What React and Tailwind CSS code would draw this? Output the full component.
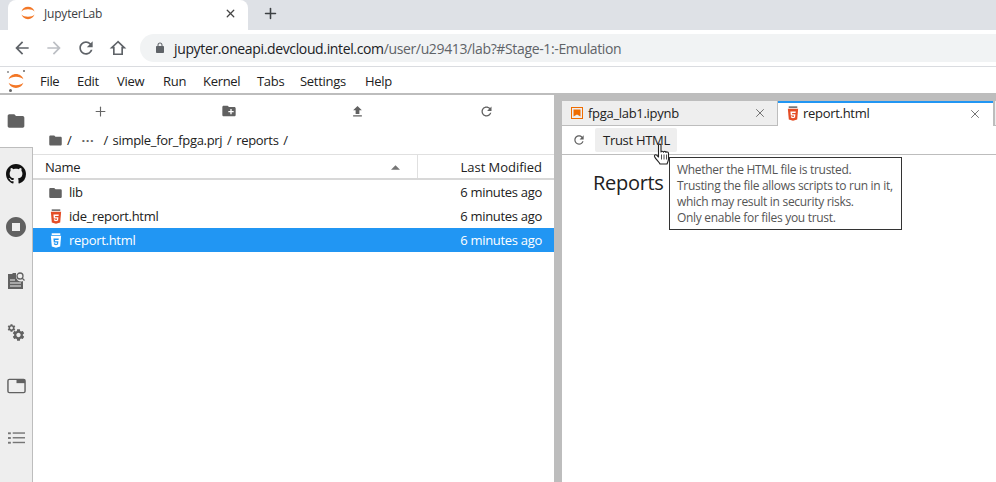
import React from 'react';
import { X, Plus } from 'lucide-react';

const FONT = "font-['Open_Sans','Noto_Sans',sans-serif]";

const Mat = ({ d, className = '', fill = '#616161' }) => (
    <svg viewBox="0 0 24 24" className={className} fill={fill}><path d={d} /></svg>
);

const FOLDER = 'M10 4H4c-1.1 0-2 .9-2 2v12c0 1.1.9 2 2 2h16c1.1 0 2-.9 2-2V8c0-1.1-.9-2-2-2h-8l-2-2z';
const NEW_FOLDER = 'M20 6h-8l-2-2H4c-1.11 0-1.99.89-1.99 2L2 18c0 1.11.89 2 2 2h16c1.11 0 2-.89 2-2V8c0-1.11-.89-2-2-2zm-1 8h-3v3h-2v-3h-3v-2h3V9h2v3h3v2z';
const UPLOAD = 'M9 16h6v-6h4l-7-7-7 7h4zm-4 2h14v2H5z';
const REFRESH = 'M17.65 6.35C16.2 4.9 14.21 4 12 4c-4.42 0-7.99 3.58-7.99 8s3.57 8 7.99 8c3.73 0 6.84-2.55 7.73-6h-2.08c-.82 2.33-3.04 4-5.65 4-3.31 0-6-2.69-6-6s2.69-6 6-6c1.66 0 3.14.69 4.22 1.78L13 11h7V4l-2.35 2.35z';
const STOP = 'M12 2C6.48 2 2 6.48 2 12s4.48 10 10 10 10-4.48 10-10S17.52 2 12 2zm4 14H8V8h8v8z';
const GITHUB = 'M8 0C3.58 0 0 3.58 0 8c0 3.54 2.29 6.53 5.47 7.59.4.07.55-.17.55-.38 0-.19-.01-.82-.01-1.49-2.01.37-2.53-.49-2.69-.94-.09-.23-.48-.94-.82-1.13-.28-.15-.68-.52-.01-.53.63-.01 1.08.58 1.23.82.72 1.21 1.87.87 2.33.66.07-.52.28-.87.51-1.07-1.78-.2-3.64-.89-3.64-3.95 0-.87.31-1.59.82-2.15-.08-.2-.36-1.02.08-2.12 0 0 .67-.21 2.2.82.64-.18 1.32-.27 2-.27.68 0 1.36.09 2 .27 1.53-1.04 2.2-.82 2.2-.82.44 1.1.16 1.92.08 2.12.51.56.82 1.27.82 2.15 0 3.07-1.87 3.75-3.65 3.95.29.25.54.73.54 1.48 0 1.07-.01 1.93-.01 2.2 0 .21.15.46.55.38A8.013 8.013 0 0016 8c0-4.42-3.58-8-8-8z';
const GEAR = 'M19.14 12.94c.04-.3.06-.61.06-.94 0-.32-.02-.64-.07-.94l2.03-1.58c.18-.14.23-.41.12-.61l-1.92-3.32c-.12-.22-.37-.29-.59-.22l-2.39.96c-.5-.38-1.03-.7-1.62-.94l-.36-2.54c-.04-.24-.24-.41-.48-.41h-3.84c-.24 0-.43.17-.47.41l-.36 2.54c-.59.24-1.13.57-1.62.94l-2.39-.96c-.22-.08-.47 0-.59.22L2.74 8.87c-.12.21-.08.47.12.61l2.03 1.58c-.05.3-.09.63-.09.94s.02.64.07.94l-2.03 1.58c-.18.14-.23.41-.12.61l1.92 3.32c.12.22.37.29.59.22l2.39-.96c.5.38 1.03.7 1.62.94l.36 2.54c.05.24.24.41.48.41h3.84c.24 0 .44-.17.47-.41l.36-2.54c.59-.24 1.13-.56 1.62-.94l2.39.96c.22.08.47 0 .59-.22l1.92-3.32c.12-.22.07-.47-.12-.61l-2.01-1.58zM12 15.6c-1.98 0-3.6-1.62-3.6-3.6s1.62-3.6 3.6-3.6 3.6 1.62 3.6 3.6-1.62 3.6-3.6 3.6z';

const Html5 = ({ light }) => (
    <svg viewBox="0 0 14 18" className="w-[12px] h-[16px] shrink-0">
        <rect x="2" y="0" width="10" height="2" fill={light ? '#fff' : '#777'} />
        <path d="M1 3h12l-1.1 12.4L7 17l-4.9-1.6z" fill={light ? '#fff' : '#e44d26'} />
        <path d="M4 6h6.2l-.2 1.8H5.9l.1 1.4h3.8l-.4 4L7 14l-2.4-.8-.1-1.7h1.5l.1.7 1 .3 1-.3.1-1.5H4.4z" fill={light ? '#2196f3' : '#fff'} />
    </svg>
);

const JupyterArcs = ({ className }) => (
    <svg viewBox="0 0 24 24" className={className} fill="#f37726">
        <path d="M12 6.200c-4.200 0-7.900 1.300-9.800 3.400C3.400 5.600 7.300 2.800 12 2.800s8.600 2.800 9.800 6.800C19.900 7.500 16.200 6.200 12 6.200z" />
        <path d="M12 17.800c4.200 0 7.900-1.300 9.800-3.400-1.200 4-5.100 6.800-9.800 6.800s-8.600-2.800-9.800-6.800c1.900 2.100 5.600 3.400 9.800 3.400z" />
    </svg>
);

const MenuLogo = () => (
    <div className="relative w-[18px] h-[22px] ml-[7px] mr-[15px] shrink-0">
        <JupyterArcs className="w-[18px] h-[20px] mt-[1px]" />
        <span className="absolute right-0 top-0 w-[2px] h-[2px] rounded-full bg-[#666]" />
        <span className="absolute left-[2px] bottom-0 w-[3px] h-[3px] rounded-full bg-[#666]" />
        <span className="absolute left-0 top-[1px] w-[1.5px] h-[1.5px] rounded-full bg-[#888]" />
    </div>
);

const menus = [
    ['File', 'w-[37px]'],
    ['Edit', 'w-[40px]'],
    ['View', 'w-[46px]'],
    ['Run', 'w-[40px]'],
    ['Kernel', 'w-[54px]'],
    ['Tabs', 'w-[43px]'],
    ['Settings', 'w-[65px]'],
    ['Help', 'w-[40px]'],
];

const files = [
    { name: 'lib', type: 'folder' },
    { name: 'ide_report.html', type: 'html' },
    { name: 'report.html', type: 'html', selected: true },
];

const BrowserChrome = () => (
    <>
        <div className="h-[30px] bg-[#dee1e6] flex items-end pl-[8px]">
            <div className="w-[240px] h-[30px] bg-white rounded-t-[8px] flex items-center pl-[12px] pr-[11px] pb-[4px]">
                <JupyterArcs className="w-[16px] h-[16px] shrink-0" />
                <span className="ml-[8px] text-[12px] text-[#3c4043] tracking-[-0.2px] flex-1 pt-[2px]">JupyterLab</span>
                <X size={13} strokeWidth={2.4} color="#444" />
            </div>
            <div className="w-[44px] h-[30px] flex items-center justify-center pb-[4px]">
                <Plus size={17} strokeWidth={2.2} color="#3c4043" />
            </div>
        </div>
        <div className="h-[36px] bg-white flex items-center border-b-0">
            <div className="w-[140px] flex items-center shrink-0">
                <svg viewBox="0 0 24 24" className="w-[20px] h-[20px] ml-[12px]" fill="#5f6368"><path d="M20 11H7.830l5.590-5.590L12 4l-8 8 8 8 1.410-1.410L7.830 13H20z" /></svg>
                <svg viewBox="0 0 24 24" className="w-[20px] h-[20px] ml-[12px]" fill="#bcbfc4"><path d="M12 4l-1.410 1.410L16.170 11H4v2h12.170l-5.580 5.590L12 20l8-8z" /></svg>
                <svg viewBox="0 0 24 24" className="w-[20px] h-[20px] ml-[12px]" fill="#5f6368"><path d={REFRESH} /></svg>
                <svg viewBox="0 0 24 24" className="w-[20px] h-[20px] ml-[12px]" fill="none" stroke="#5f6368" strokeWidth="2"><path d="M12 4.500 4.500 11.500H7V19.500H17V11.500H19.500z" /></svg>
            </div>
            <div className="flex-1 h-[28px] bg-[#f1f3f4] rounded-l-[14px] flex items-center pl-[14px]">
                <svg viewBox="0 0 24 24" className="w-[12px] h-[12px] mr-[8px]" fill="#5f6368"><path d="M18 8h-1V6c0-2.760-2.240-5-5-5S7 3.240 7 6v2H6c-1.100 0-2 .9-2 2v10c0 1.100.9 2 2 2h12c1.100 0 2-.9 2-2V10c0-1.100-.9-2-2-2zM9 6c0-1.660 1.340-3 3-3s3 1.340 3 3v2H9z" /></svg>
                <span className="text-[14px] tracking-[-0.36px] text-[#202124]">jupyter.oneapi.devcloud.intel.com<span className="text-[#5f6368]">/user/u29413/lab?#Stage-1:-Emulation</span></span>
            </div>
        </div>
    </>
);

const Sidebar = () => (
    <div className="w-[33px] shrink-0 flex flex-col">
        <div className="h-[52px] bg-white flex items-center justify-center pr-[1px]">
            <Mat d={FOLDER} className="w-[20px] h-[20px]" />
        </div>
        <div className="flex-1 bg-[#eeeeee] border-t border-r border-[#bdbdbd] flex flex-col items-center">
            <svg viewBox="0 0 16 16" className="w-[20px] h-[20px] mt-[16px]" fill="#111"><path d={GITHUB} /></svg>
            <Mat d={STOP} className="w-[24px] h-[24px] mt-[31px]" />
            <svg viewBox="0 0 20 20" className="w-[20px] h-[20px] mt-[32px]" fill="#616161">
                <path d="M2 3h4l1-1h3v2.500a5 5 0 0 0 7 5.500v8H2z" />
                <circle cx="14" cy="5" r="3" fill="none" stroke="#616161" strokeWidth="1.300" />
                <path d="M16 7l2.500 2.500" stroke="#616161" strokeWidth="1.300" />
                <path d="M4 9h5M4 12h11M4 15h11" stroke="#eeeeee" strokeWidth="1.200" />
            </svg>
            <svg viewBox="0 0 20 20" className="w-[20px] h-[20px] mt-[31px]" fill="#616161">
                <path d={GEAR} transform="translate(0.7 1.2) scale(0.4)" />
                <path d={GEAR} transform="translate(5.3 5.8) scale(0.6)" />
            </svg>
            <svg viewBox="0 0 20 16" className="w-[19px] h-[16px] mt-[36px]">
                <rect x="1" y="1" width="18" height="14" rx="1.500" fill="none" stroke="#616161" strokeWidth="1.500" />
                <rect x="10" y="1" width="9" height="4" fill="#616161" />
            </svg>
            <svg viewBox="0 0 18 14" className="w-[17px] h-[14px] mt-[37px]" fill="#757575">
                <rect x="0" y="1" width="3" height="2" /><rect x="5" y="1" width="13" height="1.500" />
                <rect x="0" y="6" width="3" height="2" /><rect x="5" y="6" width="13" height="1.500" />
                <rect x="0" y="11" width="3" height="2" /><rect x="5" y="11" width="13" height="1.500" />
            </svg>
        </div>
    </div>
);

const FileBrowser = () => (
    <div className="w-[521px] shrink-0 flex flex-col bg-white text-[13px] tracking-[-0.3px] text-[#212121]">
        <div className="h-[32px] flex px-[3px] shrink-0">
            {[
                <Plus key="a" size={15} strokeWidth={1.8} color="#666" />,
                <Mat key="b" d={NEW_FOLDER} className="w-[16px] h-[16px]" />,
                <Mat key="c" d={UPLOAD} className="w-[15px] h-[15px]" />,
                <Mat key="d" d={REFRESH} className="w-[15px] h-[15px]" />,
            ].map((icon, i) => (
                <div key={i} className="flex-1 flex items-center justify-center">{icon}</div>
            ))}
        </div>
        <div className="h-[27px] flex items-center pl-[15px] shrink-0 [word-spacing:1.6px]">
            <Mat d={FOLDER} className="w-[15px] h-[15px]" />
            <span className="ml-[4px]">/</span>
            <span className="ml-[10px] text-[#616161] font-bold tracking-[0.6px] leading-none">···</span>
            <span className="ml-[9px]">/ simple_for_fpga.prj / reports /</span>
        </div>
        <div className="h-[26px] flex border-t border-b-2 border-t-[#e0e0e0] border-b-[#d8d8d8] shrink-0">
            <div className="flex-1 flex items-center pl-[12px] justify-between pr-[17px] font-medium pt-[3px]">
                <span>Name</span>
                <svg viewBox="0 0 10 5" className="w-[9px] h-[5px] -mt-[2px]" fill="#757575"><path d="M5 0l5 5H0z" /></svg>
            </div>
            <div className="w-[137px] border-l border-[#e0e0e0] flex items-center justify-end pr-[12px] font-medium pt-[3px] tracking-[-0.03px]">Last Modified</div>
        </div>
        {files.map((f) => (
            <div key={f.name} className={`h-[24px] flex items-center pl-[15px] pr-[12px] pt-[2px] shrink-0 ${f.selected ? 'bg-[#2196f3] text-white' : ''}`}>
                <div className="w-[15px] flex justify-center shrink-0 -mt-[1px]">
                    {f.type === 'folder' ? <Mat d={FOLDER} className="w-[16px] h-[16px]" /> : <Html5 light={f.selected} />}
                </div>
                <span className="ml-[6px] flex-1">{f.name}</span>
                <span>6 minutes ago</span>
            </div>
        ))}
    </div>
);

const HandCursor = () => (
    <svg viewBox="0 0 18 24" className="absolute z-10 left-[91px] top-[17px] w-[19px] h-[24px]" fill="#fff" stroke="#222" strokeWidth="1.100" strokeLinejoin="round">
        <path d="M5 2.200c0-1.500 2.500-1.500 2.500 0V9c0-1 2.400-1.200 2.500.2 0-1 2.400-1.200 2.500.3.200-.9 2.500-.8 2.500.8v5.700c0 2-.9 3-1.500 5H6.500c-.8-1.800-4.500-5-5.500-7.500-.5-1.500 1-2.300 2.200-1.300L5 14z" />
        <path d="M8 11.500v5M10.500 11.500v5M13 11.500v5" fill="none" strokeWidth="0.800" />
    </svg>
);

const ReportPanel = () => (
    <div className="flex-1 min-w-0 flex flex-col">
        <div className="h-[31px] bg-[#bdbdbd] pt-[6px] flex shrink-0 text-[13px] tracking-[-0.3px] text-[#212121]">
            <div className="w-[215px] h-[25px] bg-[#eeeeee] border-b border-[#bdbdbd] flex items-center pl-[9px] pr-[10px] mr-[1px]">
                <svg viewBox="0 0 12 12" className="w-[12px] h-[12px] shrink-0">
                    <rect x="0.500" y="0.500" width="11" height="11" fill="none" stroke="#ef6c00" />
                    <path d="M2.500 2.500h7v7L6 7.500l-3.500 2z" fill="#ef6c00" />
                </svg>
                <span className="ml-[5px] flex-1 pt-[2px]">fpga_lab1.ipynb</span>
                <X size={14} strokeWidth={1.5} color="#616161" />
            </div>
            <div className="w-[215px] h-[25px] bg-white border-t-2 border-[#2196f3] flex items-center pl-[9px] pr-[11px] pb-[2px]">
                <Html5 />
                <span className="ml-[4px] flex-1">report.html</span>
                <X size={14} strokeWidth={1.5} color="#616161" />
            </div>
            <div className="flex-1 h-[25px] bg-[#eeeeee] border-l-2 border-b border-[#bdbdbd]" />
        </div>
        <div className="relative h-[29px] shrink-0 bg-white border-b border-[#bdbdbd] flex items-center pl-[10px] text-[13px] tracking-[-0.3px] text-[#212121]">
            <Mat d={REFRESH} className="w-[14px] h-[14px]" />
            <div className="ml-[9px] h-[24px] w-[82px] bg-[#eeeeee] rounded-[2px] flex items-center justify-center pl-[1px] pt-[2px]">Trust HTML</div>
            <HandCursor />
        </div>
        <div className="relative flex-1 bg-white">
            <div className="pl-[31px] pt-[15px] text-[20px] leading-[26px] text-[#212121] tracking-[-0.3px]">Reports</div>
            <div className="absolute left-[107px] top-[2px] w-[233px] h-[73px] bg-white border border-[#333] px-[7px] py-[4px] text-[12px] leading-[16px] tracking-[-0.3px] text-[#555]">
                <div>Whether the HTML file is trusted.</div>
                <div>Trusting the file allows scripts to run in it,</div>
                <div>which may result in security risks.</div>
                <div>Only enable for files you trust.</div>
            </div>
        </div>
    </div>
);

export default function App() {
    return (
        <div className={`w-[996px] h-[482px] overflow-hidden flex flex-col bg-white ${FONT}`}>
            <BrowserChrome />
            <div className="h-[29px] shrink-0 border-t border-b-2 border-t-[#dadce0] border-b-[#bdbdbd] bg-white flex items-center pt-[2px] text-[13px] tracking-[-0.3px] text-[#212121]">
                <MenuLogo />
                {menus.map(([label, w]) => (
                    <div key={label} className={`${w} pt-[2px]`}>{label}</div>
                ))}
            </div>
            <div className="flex-1 min-h-0 flex">
                <Sidebar />
                <FileBrowser />
                <div className="w-[8px] shrink-0 bg-[#bdbdbd]" />
                <ReportPanel />
            </div>
        </div>
    );
}
